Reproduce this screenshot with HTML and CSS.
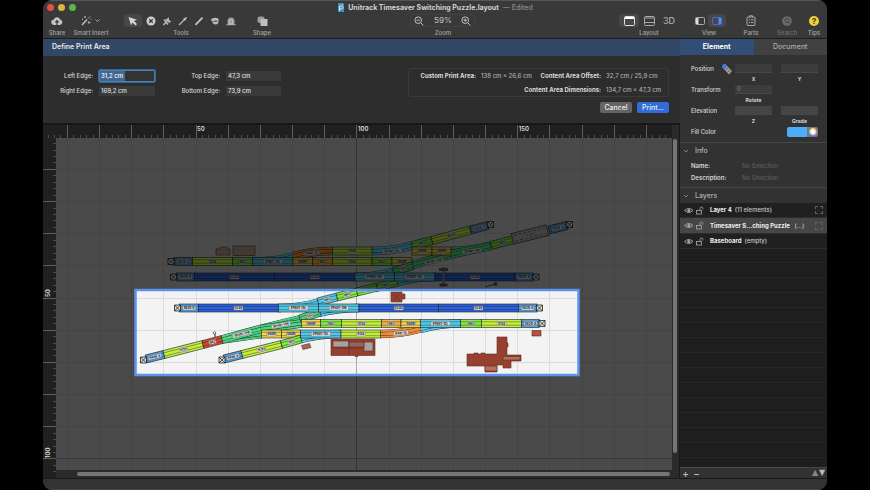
FILE: index.html
```html
<!DOCTYPE html>
<html lang="en">
<head>
<meta charset="utf-8">
<title>Unitrack Timesaver Switching Puzzle.layout</title>
<link rel="stylesheet" href="styles.css">
</head>
<body>
<div class="window">
  <header class="titlebar">
    <div class="title-row">
      <div class="lights"><i class="red"></i><i class="yellow"></i><i class="green"></i></div>
      <div class="doc-title">
        <svg width="8" height="9" viewBox="0 0 8 9"><path d="M1 0h4l2 2v7H1z" fill="#3d8fc4"/><path d="M5 0v2h2z" fill="#a9d4ec"/><path d="M2.500 8V3h2a1.500 1.500 0 010 3h-2" fill="none" stroke="#d6efff"/></svg>
        <h1>Unitrack Timesaver Switching Puzzle.layout</h1><span>— Edited</span>
      </div>
    </div>
    <nav class="toolbar">
      <div class="tool w28"><button class="icon" aria-label="Share"><svg width="12" height="10" viewBox="0 0 12 10"><path d="M3 9a2.600 2.600 0 01-.3-5.200A3.400 3.400 0 019.200 3.500 2.800 2.800 0 019 9z" fill="#c4c4c4"/><path d="M6 9V5M4.300 6.300L6 4.600l1.700 1.700" fill="none" stroke="#383838" stroke-width="1.200"/></svg></button><small>Share</small></div>
      <div class="tool w40"><button class="icon" aria-label="Smart Insert"><svg width="20" height="11" viewBox="0 0 20 11"><path d="M1 10l5-5.500" stroke="#b8b8b8" stroke-width="1.600"/><path d="M7 3.500l2-2M4 1v2M3 2h2M8 6v3M6.800 7.500h2.600M1.500 3.500v1.600M9.500 4h1" stroke="#b8b8b8" stroke-width=".8"/><path d="M14.500 4.500l2 2 2-2" fill="none" stroke="#aaa"/></svg></button><small>Smart Insert</small></div>
      <div class="tool tools">
        <div class="buttons">
          <button class="icon on" aria-label="Select"><svg width="10" height="10" viewBox="0 0 10 10"><path d="M.5 1l8.500 2.800-3 1.300 3 3-1.500 1.400-3-3-1.500 3z" fill="#d5d5d5"/></svg></button>
          <button class="icon" aria-label="Delete"><svg width="10" height="10" viewBox="0 0 10 10"><circle cx="5" cy="5" r="4.500" fill="#cfcfcf"/><path d="M3.200 3.200l3.600 3.600M6.800 3.200L3.200 6.800" stroke="#383838" stroke-width="1.300"/></svg></button>
          <button class="icon" aria-label="Join track"><svg width="10" height="10" viewBox="0 0 10 10"><path d="M1.500 9l3.500-4" stroke="#bbb" stroke-width="1.500"/><path d="M3 3.500l4.300 3.500 2-2-2-.6L6.500 1 5 3z" fill="#bbb"/><path d="M2 3.500l4 5" stroke="#bbb" stroke-width="1.400"/></svg></button>
          <button class="icon" aria-label="Flex track"><svg width="10" height="10" viewBox="0 0 10 10"><path d="M1 9l5-5" stroke="#bbb" stroke-width="1.300"/><path d="M5 3l2 2 2-3.500L8.500 1z" fill="#ccc"/></svg></button>
          <button class="icon" aria-label="Straight"><svg width="10" height="10" viewBox="0 0 10 10"><path d="M1.500 8.800l7-7.200" stroke="#c4c4c4" stroke-width="1.900"/></svg></button>
          <button class="icon" aria-label="Train"><svg width="10" height="10" viewBox="0 0 10 10"><path d="M.5 4C3 1 8 1 9 4l-2 1H2z" fill="#bbb"/><circle cx="5.500" cy="5.500" r="3" fill="#bbb"/><path d="M3.500 5.200h4" stroke="#383838"/></svg></button>
          <button class="icon" aria-label="Tunnel"><svg width="10" height="10" viewBox="0 0 10 10"><path d="M1.500 8V5a3.500 3.500 0 017 0v3z" fill="#999"/><path d="M.5 8.700h9M3.300 8V5.200a1.700 1.700 0 013.400 0V8z" stroke="#c2c2c2" fill="#999"/></svg></button>
        </div><small>Tools</small>
      </div>
      <div class="tool w24 shape"><button class="icon" aria-label="Shape"><svg width="11" height="10" viewBox="0 0 11 10"><rect x=".5" y=".5" width="7" height="6.500" rx="2" fill="#9b9b9b"/><path d="M3.500 3h7v7h-7z" fill="#c0c0bd"/></svg></button><small>Shape</small></div>
      <span class="space-a"></span>
      <div class="tool zoom">
        <div class="buttons framed">
          <button class="icon" aria-label="Zoom out"><svg width="10" height="10" viewBox="0 0 10 10"><g fill="none" stroke="#c2c2c2"><circle cx="4.200" cy="4.200" r="3.300"/><path d="M6.700 6.700l2.600 2.600M2.600 4.200h3.200"/></g></svg></button>
          <span>59%</span>
          <button class="icon" aria-label="Zoom in"><svg width="10" height="10" viewBox="0 0 10 10"><g fill="none" stroke="#c2c2c2"><circle cx="4.200" cy="4.200" r="3.300"/><path d="M6.700 6.700l2.600 2.600M2.600 4.200h3.200M4.200 2.600v3.200"/></g></svg></button>
        </div><small>Zoom</small>
      </div>
      <span class="space-b"></span>
      <div class="tool layout">
        <div class="buttons"><button class="icon on" aria-label="Plan"><svg width="11" height="10" viewBox="0 0 11 10"><rect x=".5" y=".5" width="10" height="9" rx="1" fill="none" stroke="#ddd"/><path d="M1 1h9v2H1z" fill="#fff"/></svg></button>
        <button class="icon" aria-label="Split"><svg width="11" height="10" viewBox="0 0 11 10"><rect x=".5" y=".5" width="10" height="9" rx="1" fill="none" stroke="#aaa"/><path d="M1 2h9M1 6.500h9" stroke="#aaa"/></svg></button>
        <button class="icon three">3D</button></div><small>Layout</small>
      </div>
      <div class="tool view">
        <div class="buttons"><button class="icon" aria-label="Left panel"><svg width="10" height="8" viewBox="0 0 10 8"><rect x=".5" y=".5" width="9" height="7" rx="1" fill="none" stroke="#aaa"/><path d="M1 1h2.500v6H1z" fill="#ddd"/></svg></button>
        <button class="icon on" aria-label="Right panel"><svg width="10" height="8" viewBox="0 0 10 8"><rect x=".5" y=".5" width="9" height="7" rx="1" fill="none" stroke="#3b72db"/><path d="M6.500 1H9v6H6.500z" fill="#4d8cff"/></svg></button></div><small>View</small>
      </div>
      <div class="tool w24 parts"><button class="icon" aria-label="Parts"><svg width="10" height="11" viewBox="0 0 10 11"><rect x="1" y="2" width="8" height="8.500" rx="1" fill="none" stroke="#aaa"/><path d="M3.500 2V.8h3V2M2.800 4.800h1.400M5 4.800h2.500M2.800 7.500h1.400M5 7.500h2.500" fill="none" stroke="#aaa"/></svg></button><small>Parts</small></div>
      <div class="tool w24 search"><button class="icon" aria-label="Search"><svg width="10" height="10" viewBox="0 0 10 10"><circle cx="5" cy="5" r="4.800" fill="#6b6b6b"/><circle cx="5" cy="4.500" r="2" fill="none" stroke="#444"/><path d="M6 6l2 2" stroke="#444"/></svg></button><small>Search</small></div>
      <div class="tool w24 tips"><button class="icon tip" aria-label="Tips">?</button><small>Tips</small></div>
    </nav>
  </header>

  <div class="body">
    <main class="main">
      <h2 class="banner">Define Print Area</h2>
      <form class="print-form">
        <div class="edges">
          <label for="le">Left Edge:</label><input id="le" class="focused" value="31,2 cm">
          <label for="te">Top Edge:</label><input id="te" value="47,3 cm">
          <label for="re">Right Edge:</label><input id="re" value="169,2 cm">
          <label for="be">Bottom Edge:</label><input id="be" value="73,9 cm">
        </div>
        <div class="summary">
          <dl>
            <dt>Custom Print Area:</dt><dd>138 cm × 26,6 cm</dd>
            <dt>Content Area Offset:</dt><dd>32,7 cm / 25,9 cm</dd>
            <dt class="dims">Content Area Dimensions:</dt><dd>134,7 cm × 47,3 cm</dd>
          </dl>
          <div class="actions"><button type="button">Cancel</button><button type="button" class="primary">Print...</button></div>
        </div>
      </form>
      <section class="workspace">
        <svg class="ruler-top" id="ruler-top"></svg>
        <svg class="ruler-left" id="ruler-left"></svg>
        <svg class="canvas" id="canvas"></svg>
        <div class="vbar"><i></i></div>
        <div class="hbar"><i></i></div>
      </section>
    </main>

    <aside class="sidebar">
      <div class="tabs"><button class="active">Element</button><button>Document</button></div>
      <div class="props">
        <label for="px">Position</label><svg class="pin" width="12" height="12" viewBox="0 0 12 12"><path d="M1 4l3-3 7 7-3 3.500z" fill="#999"/><path d="M1 4l1-3 3 .5.500 3L3 6z" fill="#3c78f0"/><path d="M5 7l3-3M7 9l3-3" stroke="#666"/></svg>
        <input id="px"><input id="py" class="second" aria-label="Y">
        <span class="cap x">X</span><span class="cap second">Y</span>
        <label for="rot">Transform</label><input id="rot" class="first" value="0">
        <span class="cap x">Rotate</span>
        <label for="ez">Elevation</label><input id="ez" class="first lit"><input id="eg" class="second lit" aria-label="Grade">
        <span class="cap x">Z</span><span class="cap second">Grade</span>
        <span class="lab">Fill Color</span><button class="color" aria-label="Fill Color"><i></i></button>
      </div>
      <h3><svg width="6" height="6" viewBox="0 0 6 6"><path d="M1 2l2 2 2-2" fill="none" stroke="#999" stroke-width=".8"/></svg>Info</h3>
      <dl class="info"><dt>Name:</dt><dd>No Selection</dd><dt>Description:</dt><dd>No Selection</dd></dl>
      <h3><svg width="6" height="6" viewBox="0 0 6 6"><path d="M1 2l2 2 2-2" fill="none" stroke="#999" stroke-width=".8"/></svg>Layers</h3>
      <ul class="layers">
        <li><svg class="eye" width="20" height="9"><use href="#eyelock"/></svg><b>Layer 4</b><span>(11 elements)</span><i></i></li>
        <li class="sel"><svg class="eye" width="20" height="9"><use href="#eyelock"/></svg><b>Timesaver S...ching Puzzle</b><span>&nbsp;(...)</span><i></i></li>
        <li><svg class="eye" width="20" height="9"><use href="#eyelock"/></svg><b>Baseboard</b><span>(empty)</span></li>
      </ul>
      <div class="side-foot"><button aria-label="Add layer">+</button><button aria-label="Remove layer">−</button><button class="arrow up" aria-label="Move up">▲</button><button class="arrow" aria-label="Move down">▼</button></div>
    </aside>
  </div>
  <footer class="statusbar"></footer>
</div>
<svg class="defs" width="0" height="0"><defs><g id="eyelock" fill="none" stroke="#aaa"><path d="M.5 4.500Q5 .5 9 4.500 5 8.500.5 4.500z" stroke-width=".9"/><circle cx="4.800" cy="4.500" r="1.500" fill="#aaa" stroke="none"/><rect x="12.500" y="4.500" width="5" height="3.500" stroke-width=".8"/><path d="M16 4.500V2.500a1.400 1.400 0 012.900 0V3.500" stroke-width=".8"/></g></defs></svg>
<script src="layout.js"></script>
</body>
</html>
```
FILE: styles.css
```css
* { box-sizing: border-box; }
body { margin: 0; background: #000; color: #ddd; font: 500 7px/10px Inter, "Liberation Sans", sans-serif; }
button, input { font: inherit; color: inherit; border: 0; padding: 0; margin: 0; background: none; min-width: 0; }
h1, h2, h3, dl, dd, ul { margin: 0; padding: 0; font-size: inherit; }
svg { display: block; flex: none; }
.defs { position: absolute; }
.window { margin: 0 43px; min-height: 100vh; display: flex; flex-direction: column; background: #2d2d2d; border-radius: 9px; overflow: hidden; }

.titlebar { background: #393939; border-top: 1px solid #565656; border-bottom: 1px solid #1c1c1c; height: 39px; }
.title-row { display: grid; grid-template-columns: 54px 1fr 54px; height: 13px; align-items: center; }
.lights { display: flex; gap: 4px; padding-left: 4px; }
.lights i { width: 7px; height: 7px; border-radius: 50%; }
.red { background: #e0533f; }
.yellow { background: #dfb640; }
.green { background: #57b946; }
.doc-title { display: flex; gap: 3px; justify-content: center; align-items: center; color: #8a8a8a; }
.doc-title h1 { color: #d2d2d2; font-weight: 700; }
.doc-title span { padding-left: 1px; }
.toolbar { display: flex; }
.tool { display: flex; flex-direction: column; align-items: center; color: #a5a5a5; font-size: 6px; line-height: 9px; }
.tool small { font-size: 6px; white-space: nowrap; margin-top: 1px; }
.w28 { width: 28px; }
.w40 { width: 40px; }
.w24 { width: 24px; }
.tools { margin-left: 13px; }
.shape { margin-left: 12px; }
.space-a { flex: 136; }
.space-b { flex: 144; }
.buttons { display: flex; }
.icon { width: 16px; height: 13px; display: flex; align-items: center; justify-content: center; border-radius: 3px; }
.tools .icon + .icon { border-left: 1px solid #3e3e3e; }
.w28 .icon, .w40 .icon, .w24 .icon { width: 22px; }
.tools .on, .layout .on, .view .on { background: #474747; width: 18px; }
.framed { border: 1px solid #424242; border-radius: 3px; width: 65px; height: 13px; justify-content: space-between; align-items: center; font-size: 8px; color: #bbb; }
.layout { width: 58px; }
.layout .icon, .layout .on { width: 20px; }
.three { font-size: 9px; color: #aaa; }
.view { margin-left: 13px; width: 36px; }
.parts { margin-left: 12px; }
.search { margin-left: 12px; color: #707070; }
.tips { margin: 0 1px 0 3px; }
.w24 .tip { width: 10px; height: 10px; margin: 2px 0 1px; border-radius: 50%; background: #f1cf3d; color: #554600; font-weight: 800; font-size: 8px; }

.body { flex: 1; display: flex; min-height: 0; }
.main { flex: 1; min-width: 0; display: flex; flex-direction: column; }
.banner { height: 17px; line-height: 16px; padding-left: 9px; background: #324766; color: #e8e8e8; font-weight: 600; }
.print-form { height: 69px; display: flex; justify-content: space-between; padding: 12px 11px 0 13px; border-bottom: 2px solid #171717; font-size: 6px; }
.edges { display: grid; grid-template-columns: 37px 56px 59px 55px; grid-template-rows: 15px 15px; column-gap: 6px; align-items: center; text-align: right; height: 30px; color: #d8d8d8; }
.edges label { white-space: nowrap; }
.edges input { width: 100%; height: 10px; background: #3a3a3a; color: #e0e0e0; padding-left: 2px; }
.edges .focused { height: 12px; border: 1px solid #477fb7; outline: 1px solid #386694; border-radius: 1px; background: linear-gradient(90deg, #41678e 25px, #333 25px); color: #fff; padding-left: 1px; }
.summary { width: 261px; }
.summary dl { display: grid; grid-template-columns: 65px 52px 63px 1fr; column-gap: 5px; border: 1px solid #3a3a3a; border-radius: 3px; height: 29px; padding: 0 4px 0 2px; line-height: 14px; white-space: nowrap; }
.summary dt { font-weight: 700; color: #dcdcdc; justify-self: end; }
.summary dd { color: #b0b0b0; }
.summary .dims { grid-column: 1 / 4; }
.actions { display: flex; gap: 5px; justify-content: flex-end; margin-top: 5px; font-size: 7px; }
.actions button { width: 32px; height: 11px; background: #646464; border-radius: 2px; color: #eee; }
.actions .primary { background: #306cdb; }

.workspace { flex: 1; min-height: 0; display: grid; grid-template: "rt rt v" 13px "rl c v" minmax(0, 1fr) "rl h v" 8px / 13px minmax(0, 1fr) 8px; background: #2b2b2b; }
.workspace svg { width: 100%; height: 100%; }
.ruler-top { grid-area: rt; background: #202020; }
.ruler-left { grid-area: rl; background: #202020; }
.canvas { grid-area: c; background: #f3f3f4; }
.vbar { grid-area: v; padding: 14px 2px 25px 1px; border-right: 1px solid #171717; }
.hbar { grid-area: h; padding: 2px 2px 2px 21px; }
.vbar i, .hbar i { display: block; height: 100%; background: #757575; border-radius: 3px; }
.major { stroke: #5d5d5d; }
.minor { stroke: #4c4c4c; }
.ruler-label { fill: #ddd; font-size: 6px; font-weight: 600; }
.track-label { font-size: 3px; font-weight: 700; fill: #111; text-anchor: middle; }

.sidebar { width: 147px; display: flex; flex-direction: column; background: #323232; }
.tabs { display: grid; grid-template-columns: 1fr 1fr; height: 16px; background: #414141; color: #aaa; }
.tabs .active { background: #324e74; color: #fff; font-weight: 700; }
.props { display: grid; grid-template-columns: 28px 12px 37px 37px; column-gap: 2px; grid-template-rows: 11px 10px 11px 10px 11px 10px 11px; padding: 8px 0 5px 11px; align-items: center; color: #d8d8d8; font-size: 6px; }
.props label, .lab { white-space: nowrap; grid-column: 1; }
.props input { width: 37px; height: 9px; background: #3c3c3c; border-bottom: 1px solid #484848; padding-left: 2px; color: #777; }
.props .lit { background: #454545; }
.cap { font-size: 5px; line-height: 8px; font-weight: 700; text-align: center; }
.cap.x, .first { grid-column: 3; }
.props .second { grid-column: 4; margin-left: 7px; width: 37px; }
.color { grid-column: 4; justify-self: end; width: 31px; height: 10px; margin-right: -7px; border-radius: 2px; background: linear-gradient(90deg, #4eadfb 20px, #777 20px); display: flex; justify-content: flex-end; align-items: center; }
.color i { width: 8px; height: 8px; margin-right: 1px; border-radius: 50%; background: radial-gradient(#fff 30%, transparent 70%), conic-gradient(#f7d13f, #ef7160, #b85de5, #467bea, #60dd85, #f7d13f); }
.sidebar h3 { display: flex; align-items: center; gap: 6px; height: 16px; padding-left: 3px; border-top: 1px solid #464646; font-weight: 500; color: #b0b0b0; }
.info { display: grid; grid-template-columns: 51px 1fr; padding: 2px 0 4px 11px; line-height: 12px; height: 29px; font-size: 6px; }
.info dt { color: #d8d8d8; font-weight: 600; }
.info dd { color: #5c5c5c; }
.layers { flex: 1; list-style: none; background: repeating-linear-gradient(#1e1e1e 0 14px, #262626 14px 15px); font-size: 6px; }
.layers li { height: 15px; display: flex; align-items: center; gap: 3px; padding: 0 4px; color: #c8c8c8; white-space: nowrap; background: #202020; border-bottom: 1px solid #2c2c2c; }
.layers .sel { background: #464646; height: 16px; }
.layers b { color: #eee; margin-left: 3px; }
.layers i { width: 8px; height: 8px; border: 1px dashed #5e5e5e; margin-left: auto; }
.side-foot { height: 11px; display: flex; gap: 4px; padding: 0 2px; align-items: center; border-top: 1px solid #484848; color: #bbb; font-size: 10px; }
.side-foot button { width: 7px; line-height: 8px; }
.side-foot .arrow { font-family: "DejaVu Sans", sans-serif; font-size: 8px; width: 6px; }
.side-foot .up { margin-left: auto; margin-right: -3px; color: #888; }
.statusbar { height: 12px; background: #323333; border-top: 1px solid #1b1b1b; border-bottom: 1px solid #454545; }
```
FILE: layout.js
```js
// Draws the rulers, the grid and the track plan. Plan coordinates start at (56, 138).
const C = {
  sky: '#4c9fe8', blue: '#2f62db', cyan: '#56cae8', lime: '#c4f03c', leaf: '#83ec3f',
  green: '#4fd27d', yellow: '#f2d645', orange: '#f08a35', amber: '#f3b640', red: '#d54a28',
  brick: '#984030', steel: '#b0aca8', tan: '#a89a84'
};
const STEP = 32.17, X0 = 67.4, Y0 = 169.4;

// Straight pieces: start, end, colour, article label.
const pieces = [
  [174,261.5,192.5,261.5,'sky','S62B-A'],[192.5,261.5,232.5,261.5,'lime','S124'],[232.5,261.5,252.5,261.5,'leaf','S62'],
  [252.5,261.5,293,261.5,'cyan','EP481-15L'],[293,261.5,312.5,261.5,'yellow','S60R'],[312.5,261.5,332.5,261.5,'amber','S62'],
  [332.5,261.5,372,261.5,'lime','S124'],[372,261.5,392,261.5,'leaf','S62'],[392,261.5,412,261.5,'yellow','S60R'],
  [332.5,251,372,251,'lime','S124'],[412,245.5,432,240.5,'leaf','S62'],[432,240.5,470.5,230,'lime','S124'],[470.5,230,488,225.5,'sky','S62B-A'],
  [412,251,432,251,'yellow','S60R'],[432,251,451,251,'yellow','S60R'],[491,245.5,514,239.5,'leaf','S62'],
  [549,230,567,225.5,'sky','S62B-A'],
  [176.5,277,194.5,277,'sky','S62B-A'],[194.5,277,274.5,277,'blue','S248'],[274.5,277,355,277,'blue','S248'],
  [375,288,397,282,'leaf','S62'],[393,271.5,413,265.5,'green','S62'],
  [355,277,394.5,277,'cyan','EP481-15L'],[394.5,277,435,277,'cyan','EP481-15L'],[435,277,515,277,'blue','S248'],[515,277,533,277,'sky','S62B-A'],
  [318,302,337,297,'cyan','S62'],[337,297,357,292,'leaf','S62'],[357,292,377,287,'leaf','S62'],[300,319,320,312,'green','S62'],
  [179.5,308,198.5,308,'sky','S62B-B'],[198.5,308,278.5,308,'blue','S248'],[278.5,308,318.5,308,'cyan','EP481-15L'],
  [318.5,308,359,308,'cyan','EP481-15R'],[359,308,438.5,308,'blue','S248'],[438.5,308,518.5,308,'blue','S248'],[518.5,308,537,308,'sky','S62B-A'],
  [301.5,323.5,320.5,323.5,'yellow','S60R'],[320.5,323.5,341.5,323.5,'leaf','S62'],[341.5,323.5,381.5,323.5,'lime','S124'],
  [381.5,323.5,401,323.5,'amber','S62'],[401,323.5,420.5,323.5,'yellow','S60R'],[420.5,323.5,460.5,323.5,'cyan','EP481-15L'],
  [460.5,323.5,481.5,323.5,'leaf','S62'],[481.5,323.5,521.5,323.5,'lime','S124'],[521.5,323.5,539.5,323.5,'sky','S62B-A'],
  [261.5,334,281.5,334,'yellow','S60R'],[281.5,334,300.5,334,'yellow','S60R'],[300.5,334,341,334,'cyan','EP481-15L'],[341,334,380.5,334,'lime','S124'],
  [146,359,164,354.5,'sky','S62B-A'],[164,354.5,203,344.5,'lime','S124'],[203,344.5,222,339.5,'red','S62'],
  [224,359,242,354.5,'sky','S62B-A'],[242,354.5,281.5,344.5,'lime','S124'],[281.5,344.5,301,339,'leaf','S62']
];
// Curved legs: path, colour, label, label position and angle. Drawn before the straight pieces.
const curves = [
  ['M252.500 261.500Q275 261.500 293 256.500','cyan'],
  ['M293 256Q312 251 332.500 251','orange','R481-15',312,253,-5],
  ['M372 251Q392 251 412 245.500','cyan','EP481-15L',392,251,-5],
  ['M451 251Q471 251 491 245.500','green','EP481-15R',472,251,-8],
  ['M412 265Q445 255 491 246','green','EP481-15R',434,261,-12],
  ['M355 277Q375 277 394.500 271.500','cyan'],['M397 282Q415 277 435 277','cyan'],
  ['M278.500 308Q299 308 318.500 302.500','cyan'],['M318.500 313Q338 308 359 308','cyan'],
  ['M222 339.500L262 334','green'],['M222 339.500Q262 328 301 319','green','EP481-15R',242,334,-14],
  ['M261 329L301.500 323.500','green','EP481-15R',281,325,-12],
  ['M301 339Q320 334 341 334','cyan'],
  ['M420.500 329Q440 323.500 460.500 323.500','cyan'],
  ['M380.500 334Q401 334 420.500 328.500','orange','R481-15',401,333,-5]
];
const bumpers = [[171,261.500],[173.500,277],[490.500,224.500],[569.500,224.500],[536,277],[177.500,308],[539.500,308],[542,323.500],[143.500,360],[222,360]];

const label = (x, y, a, t) => {
  const w = t.length * 2 + 1;
  return `<g transform="translate(${x} ${y}) rotate(${a})"><rect x="${-w / 2}" y="-2" width="${w}" height="4" fill="#ddd" stroke="#777" stroke-width=".4"/><text class="track-label" y="1">${t}</text></g>`;
};
const leg = ([d, c]) => `<g fill="none"><path d="${d}" stroke="#1d3038" stroke-width="8.400"/><path d="${d}" stroke="${C[c]}" stroke-width="7.600"/><path d="${d}" stroke="#173038" stroke-width="3.800"/><path d="${d}" stroke="${C[c]}" stroke-width="2.900"/></g>`;
const piece = ([x1, y1, x2, y2, c]) => {
  const l = Math.hypot(x2 - x1, y2 - y1), a = Math.atan2(y2 - y1, x2 - x1) * 180 / Math.PI;
  return `<g transform="translate(${x1} ${y1}) rotate(${a})"><rect y="-4" width="${l}" height="8" fill="${C[c]}" stroke="#17252c" stroke-width=".6"/><path d="M0-1.700H${l}M0 1.700H${l}" stroke="#111" stroke-opacity=".6" stroke-width=".6"/></g>`;
};
const pieceLabel = ([x1, y1, x2, y2, , t]) => label((x1 + x2) / 2, (y1 + y2) / 2, Math.atan2(y2 - y1, x2 - x1) * 180 / Math.PI, t);

let grid = '';
for (let i = 0; i < 60; i++) {
  const x = Math.floor(X0 + i * STEP - STEP) + .5, y = Math.floor(Y0 + i * STEP - STEP) + .5;
  grid += `<path d="M${x} 0V3000" stroke="${i === 10 ? '#aaa' : '#dcdcdc'}"/><path d="M0 ${y}H3000" stroke="${i === 10 ? '#b4b4b4' : '#dcdcdc'}"/>`;
}

const scenery = `
<g stroke="#5a2c22" stroke-width=".6">
<path d="M216 249h4v-2h7v2h3v6h-14z" fill="${C.tan}"/><path d="M233 246h22v9.500h-22z" fill="${C.tan}"/>
<path d="M391 292h11v2h3v5h-3v3h-11z" fill="${C.brick}"/><path d="M393 294l7 6M400 294l-7 6"/>
<path d="M331 339h44v16.500h-17v1h-3v-1h-24z" fill="${C.brick}"/><path d="M333 341h16v6h-16zM364 342h9v9h-9z" fill="#aaa0a0"/><path d="M349 342h15v5h-15z" fill="#93665e"/><path d="M349 339v16M331 348h33" fill="none"/>
<path d="M301.500 345.500l8-2 1.500 4-8 2z" fill="#aa6654"/>
<path d="M497 337h10v6h1v4h-1v8h14v6h-10v7h-8v-3h-6v7h-12v-6h-18v-12h7v-1h4v1h3v-1h4v1h12z" fill="${C.brick}"/><path d="M503 356.500h17v3.500h-17z" fill="#b5705b"/><path d="M485 366h12v5h-12z" fill="#b5705b"/>
<path d="M532 330.500h9v5.500h-9z" fill="#b0543f"/></g>
<path d="M443.500 267v20" stroke="#777" stroke-width="2"/><path d="M439 269.500h9M439.500 285h8" stroke="#555" stroke-width="3"/><path d="M485 287l10-3" stroke="#555"/><circle cx="495.500" cy="284" r="2" fill="#555"/>
<path d="M215 337v-4" stroke="#222"/><circle cx="214.500" cy="333" r="1.300" fill="#fff" stroke="#222" stroke-width=".6"/>`;

const bridge = `<g transform="translate(530 234.500) rotate(-14)"><rect x="-18" y="-5.500" width="36" height="11" fill="${C.steel}" stroke="#555"/><path d="M-16-3H16M-16 3H16" stroke="#666" stroke-dasharray="3 2"/></g>${label(530, 235, -14, 'S124')}`;
const ends = bumpers.map(([x, y]) => `<path d="M${x - 3} ${y - 3}h6v6h-6zl6 6m0-6l-6 6" fill="#ddd" stroke="#222" stroke-width=".8"/>`).join('');
const outside = 'M0 0H3000V3000H0zM136 290V375H579V290z';

// The paper outside the print area is shaded a little more than the track on it.
document.getElementById('canvas').innerHTML = `<g transform="translate(-56 -138)">${grid}
<path d="${outside}" fill-rule="evenodd" opacity=".2"/>
${curves.map(leg).join('')}${pieces.map(piece).join('')}
${curves.filter(c => c[2]).map(c => label(c[3], c[4], c[5], c[2])).join('')}${pieces.map(pieceLabel).join('')}
${ends}${bridge}${scenery}
<path d="${outside}" fill-rule="evenodd" opacity=".62"/>
<rect x="135.500" y="290" width="443" height="85" fill="none" stroke="#5a92ee" stroke-width="2.500"/></g>`;

// Rulers: one small tick for each fifth of a grid step, numbers every fifth step.
const rt = document.getElementById('ruler-top'), rl = document.getElementById('ruler-left');
const wide = rt.getBoundingClientRect().width, tall = rl.getBoundingClientRect().height;
let across = '', down = '';
for (let i = -5; i < 300; i++) {
  const x = Math.floor(X0 - 43 + i * STEP / 5) + .5, y = Math.floor(Y0 - 138 + i * STEP / 5) + .5, big = i % 5 === 0;
  const k = big ? 'major' : 'minor';
  across += `<path class="${k}" d="M${x} ${big ? 0 : 10}V13"/>`;
  down += `<path class="${k}" d="M${big ? 0 : 10} ${y}H13"/>`;
}
for (let n = 1; n < 10; n++) {
  const x = X0 - 43 + (n * 5 - 1) * STEP, y = Y0 - 138 + (n * 5 - 1) * STEP;
  if (x + 14 < wide) across += `<text class="ruler-label" x="${x + 1}" y="6">${n * 50}</text>`;
  if (y < tall) down += `<text class="ruler-label" transform="translate(7 ${y - 1}) rotate(-90)">${n * 50}</text>`;
}
rt.innerHTML = across;
rl.innerHTML = down;
```
